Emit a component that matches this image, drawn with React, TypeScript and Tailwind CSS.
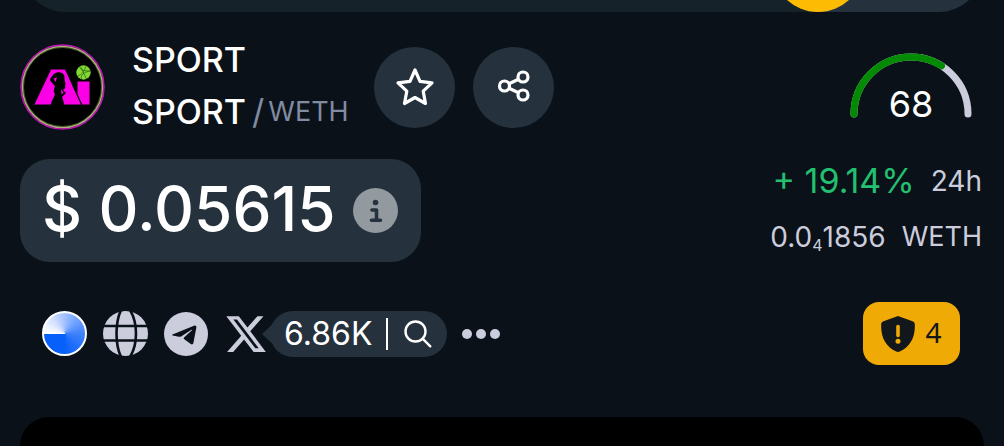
import type { ReactNode } from "react";
import { FaXTwitter } from "react-icons/fa6";

interface RoundButtonProps {
  label: string;
  children: ReactNode;
}

function RoundButton({ label, children }: RoundButtonProps) {
  return (
    <button
      type="button"
      aria-label={label}
      className="flex size-[81px] shrink-0 items-center justify-center rounded-full bg-[#25323d] text-white"
    >
      {children}
    </button>
  );
}

function TokenLogo() {
  return (
    <svg viewBox="0 0 85 86" className="h-[86px] w-[85px] shrink-0">
      <ellipse cx="42.500" cy="43" rx="41.500" ry="42" fill="#000" stroke="#c213b4" strokeWidth="1.500" />
      <ellipse cx="42.500" cy="43" rx="40" ry="40.500" fill="none" stroke="#b5a98a" strokeWidth="1.500" />
      <ellipse cx="42.500" cy="43" rx="39" ry="39.500" fill="none" stroke="#4d7a2a" strokeWidth="0.800" />
      <path d="M14.500 60.500 31 25.500H45L61 60.500Z" fill="#fb00e6" />
      <path d="M57.500 37.500H69.500V60.500H62L57.500 50Z" fill="#fb00e6" />
      <path d="m53 42 9 19" stroke="#000" strokeWidth="0.800" />
      <path
        d="M34 30c3-3 9-2 10 1 1 2 0 4 1 6 0 2 1 3 0 5 1 2-1 3-2 4l3 3-4 4c1 3 2 5 2 8H31c0-4 3-7 4-11-2-3-1-5 0-8-2-2-4-4-5-6 1-3 2-4 4-6Z"
        fill="#000"
      />
      <path d="m33.500 34.500 3.500-1-1.500 4.500ZM41 45l2.500 3.500-2 2Z" fill="#fb00e6" />
      <circle cx="63.500" cy="28.500" r="7.200" fill="#80d833" />
      <path
        d="M57.500 32c4-1 8-6 8-10M59.500 23.500c2 3 6 4 11 3M61.500 35c-1-4 2-7 9-8M60.500 22.500l6 12.500"
        fill="none"
        stroke="#24520c"
        strokeWidth="0.600"
      />
    </svg>
  );
}

function ScoreGauge({ score }: { score: number }) {
  return (
    <div className="mr-[11px] grid h-[68px] w-[124px] shrink-0">
      <svg viewBox="0 0 124 66" className="col-start-1 row-start-1 h-[66px] w-[124px]">
        <g fill="none" strokeWidth="7" strokeLinecap="round">
          <path d="M5 61a57 57 0 0 1 114 0" stroke="#cbccdc" />
          <path
            d="M5 61a57 57 0 0 1 114 0"
            stroke="#028b02"
            pathLength="100"
            strokeDasharray={`${score} 200`}
          />
        </g>
      </svg>
      <span className="col-start-1 row-start-1 self-end text-center text-[36px] leading-[34px]">
        {score}
      </span>
    </div>
  );
}

function InfoIcon() {
  return (
    <svg viewBox="0 0 45 45" className="size-[45px]">
      <circle cx="22.500" cy="22.500" r="22.500" fill="#92999f" />
      <circle cx="22.500" cy="14.500" r="2.800" fill="#25323d" />
      <path
        d="M19 22h4.500v10M18.500 32.300h9"
        fill="none"
        stroke="#25323d"
        strokeWidth="3.600"
        strokeLinecap="round"
        strokeLinejoin="round"
      />
    </svg>
  );
}

function GlobeIcon() {
  return (
    <svg viewBox="0 0 45 45" className="size-[45px]">
      <circle cx="22.500" cy="22.500" r="22.500" fill="#cbccdc" />
      <g fill="none" stroke="#0a1118" strokeWidth="2.600">
        <path d="M0 15H45M0 29.500H45" />
        <path d="M18 -1C12 12 12 33 18 46M27 -1C35 12 35 33 27 46" />
      </g>
    </svg>
  );
}

function TelegramIcon() {
  return (
    <svg viewBox="0 0 44 44" className="size-[44px]">
      <circle cx="22" cy="22" r="22" fill="#cbccdc" />
      <path
        d="M8.500 22.500 30 13.700c1.500-.6 2.700.2 2.300 2L29.400 31c-.3 1.400-1.400 1.800-2.600 1l-6.500-4.800c-.8-.6-.8-1.200 0-1.900l7.700-7.100c.4-.4 0-.7-.5-.4l-10.400 6.600c-.8.5-1.400.6-2.200.3L8.700 23.500c-.7-.3-.8-.7-.2-1Z"
        fill="#0a1118"
      />
    </svg>
  );
}

function ShieldIcon() {
  return (
    <svg viewBox="0 0 34 36" className="h-9 w-[34px]">
      <path
        d="M15.700.4a3 3 0 0 1 2.600 0L31.500 5.200A3 3 0 0 1 33.800 8C34.500 21 29 31 18.700 35.500a4 4 0 0 1-3.400 0C5 31 -.5 21 .2 8a3 3 0 0 1 2.300-2.800Z"
        fill="#11171a"
      />
      <path d="M17 10.500v9" stroke="#efaa06" strokeWidth="3.600" strokeLinecap="round" />
      <circle cx="17" cy="25.300" r="2.500" fill="#efaa06" />
    </svg>
  );
}

export default function App() {
  return (
    <div className="flex min-h-screen flex-col bg-[#0a1118] px-5 font-[Inter,'Liberation_Sans',sans-serif] text-white">
      {/* lower edge of the switch bar */}
      <div className="flex h-3 items-end overflow-hidden">
        <div className="flex h-[92px] flex-1 shrink-0 justify-end rounded-[46px] bg-[#152229]">
          <div className="w-[212px] rounded-full bg-[#25323d]">
            <div className="size-[92px] rounded-full bg-[#fdbb04]" />
          </div>
        </div>
      </div>

      <header className="mt-[22px] flex items-center justify-between">
        <div className="flex items-center">
          <TokenLogo />
          <div className="ml-[27px] w-[224px] pb-0.5 text-[34px] leading-[52px] font-medium">
            <h1>SPORT</h1>
            <div className="flex items-center">
              SPORT
              <span className="ml-1.5 font-normal text-[#818ba1]">/</span>
              <span className="ml-1 text-[27px] font-normal text-[#818ba1]">WETH</span>
            </div>
          </div>
          <div className="ml-[18px] flex gap-[18px]">
            <RoundButton label="Add to favourites">
              <svg viewBox="0 0 40 40" className="size-10">
                <path
                  d="m20 3 5 11.300 12 1.500-8.800 8.400 2.300 12.300L20 30.500 9.500 36.500l2.300-12.300L3 15.800l12-1.500Z"
                  fill="none"
                  stroke="currentColor"
                  strokeWidth="3.200"
                  strokeLinejoin="round"
                />
              </svg>
            </RoundButton>
            <RoundButton label="Share">
              <svg viewBox="0 0 34 34" className="size-[34px]">
                <g fill="none" stroke="currentColor" strokeWidth="3.200">
                  <circle cx="7.500" cy="16" r="5" />
                  <circle cx="26" cy="7" r="5" />
                  <circle cx="26" cy="25" r="5" />
                  <path d="m12 13.800 9.500-4.600M12 18.200l9.500 4.600" />
                </g>
              </svg>
            </RoundButton>
          </div>
        </div>
        <ScoreGauge score={68} />
      </header>

      <section className="mt-[19px] flex items-start justify-between">
        <div className="flex h-[103px] w-[401px] items-center justify-between rounded-[30px] bg-[#25323d] pr-[23px] pl-[22px]">
          <span className="pb-1 text-[62px] leading-[96px] font-medium whitespace-nowrap">
            $ 0.05615
          </span>
          <button type="button" aria-label="Price info">
            <InfoIcon />
          </button>
        </div>
        <div className="flex flex-col items-end pr-0.5 text-[28px] text-[#cbccdc]">
          <div className="flex items-center gap-4 leading-[44px]">
            <span className="text-[34px] text-[#22c070]">+ 19.14%</span>
            <span>24h</span>
          </div>
          <div className="mt-3 flex gap-4 leading-[44px]">
            <span>
              0.0<sub className="text-base leading-none">4</sub>1856
            </span>
            <span className="text-[27px]">WETH</span>
          </div>
        </div>
      </section>

      <section className="mt-10 flex items-center justify-between pr-6 pl-[22px]">
        <div className="flex items-center">
          <a href="#scan" aria-label="Explorer">
            <span className="block size-[45px] rounded-full border-2 border-white bg-[conic-gradient(from_270deg,#ffffff,#d8e3ff_45deg,#80abff_120deg,#3f82fb_180deg,#0860fa_270deg,#0860fa)]" />
          </a>
          <a href="#website" aria-label="Website" className="ml-4">
            <GlobeIcon />
          </a>
          <a href="#telegram" aria-label="Telegram" className="ml-4">
            <TelegramIcon />
          </a>
          <a href="#x" aria-label="X" className="ml-4 text-[#cbccdc]">
            <FaXTwitter className="size-[44px]" />
          </a>
          <div className="flex items-center">
            <svg viewBox="0 0 20 46" className="-mr-3 -ml-1.5 h-[46px] w-5">
              <path d="M0 23 20 4V42Z" fill="#25323d" />
            </svg>
            <div className="flex h-[46px] items-center rounded-full bg-[#25323d] pr-[15px] pl-3.5">
              <span className="text-[32px] leading-10">6.86K</span>
              <span className="ml-3.5 h-8 w-0.5 bg-white" />
              <button type="button" aria-label="Search" className="ml-4">
                <svg viewBox="0 0 28 28" className="size-7">
                  <g fill="none" stroke="currentColor" strokeWidth="2.400" strokeLinecap="round">
                    <circle cx="11.500" cy="11.500" r="10" />
                    <path d="m18.800 18.800 7.500 7.500" />
                  </g>
                </svg>
              </button>
            </div>
          </div>
          <button type="button" aria-label="More" className="ml-[15px] flex gap-1">
            <span className="size-2.5 rounded-full bg-[#cbccdc]" />
            <span className="size-2.5 rounded-full bg-[#cbccdc]" />
            <span className="size-2.5 rounded-full bg-[#cbccdc]" />
          </button>
        </div>
        <button
          type="button"
          className="flex h-[63px] w-[97px] items-center justify-center gap-2.5 rounded-2xl bg-[#efaa06] text-[#11171a]"
        >
          <ShieldIcon />
          <span className="pb-1 font-['Noto_Sans',sans-serif] text-[28px] leading-9">4</span>
        </button>
      </section>

      <div className="mt-[52px] flex-1 rounded-t-[36px] bg-black" />
    </div>
  );
}
